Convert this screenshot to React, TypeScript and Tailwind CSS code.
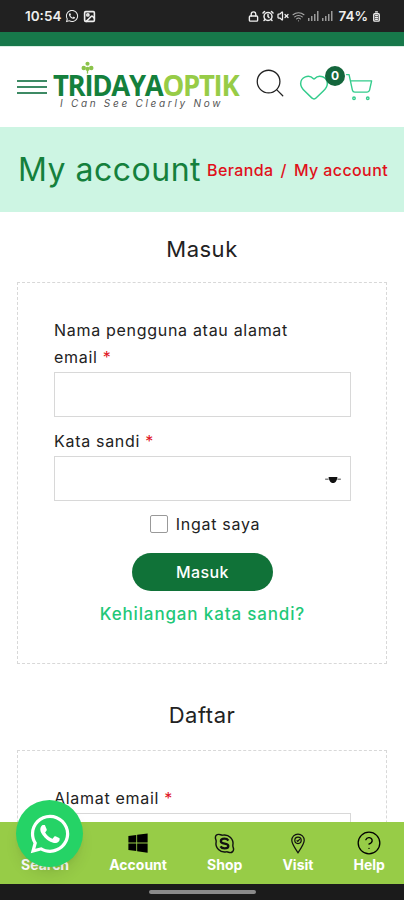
import React from "react";
import { FaWhatsapp, FaWindows } from "react-icons/fa";
import { CircleHelp, Heart, Search, ShoppingCart, Image, Lock, AlarmClock, VolumeX, Wifi, BatteryFull } from "lucide-react";

const font = { fontFamily: "Inter, 'Noto Sans', sans-serif" };

// Small signal bars used in the status bar
const Signal = () => (
  <svg width="11" height="10" viewBox="0 0 11 10" fill="#9a9a9a">
    <rect x="0" y="7" width="1.5" height="3" />
    <rect x="3" y="5" width="1.5" height="5" />
    <rect x="6" y="3" width="1.5" height="7" />
    <rect x="9" y="0" width="1.5" height="10" />
  </svg>
);

const StatusBar = () => (
  <div className="flex h-8 items-center justify-between bg-[#212121] pl-[25px] pr-[22px] text-[13.5px] font-semibold text-[#eeeeee]">
    <div className="flex items-center gap-[4px]">
      <span>10:54</span>
      <FaWhatsapp size={14} />
      <Image size={13} strokeWidth={3} />
    </div>
    <div className="flex items-center gap-[3px]">
      <Lock size={11} strokeWidth={3} />
      <AlarmClock size={12} strokeWidth={3} />
      <VolumeX size={12} strokeWidth={2.5} />
      <Wifi size={13} color="#aaaaaa" />
      <Signal />
      <Signal />
      <span className="ml-[2px]">74%</span>
      <BatteryFull size={11} strokeWidth={3} className="-rotate-90" />
    </div>
  </div>
);

const Logo = () => (
  <div className="relative ml-[6px] mt-[6px] w-[188px]">
    <svg className="absolute left-[27px] top-[-12px]" width="15" height="13" viewBox="0 0 16 13" fill="#8bc34a">
      <circle cx="8" cy="2.5" r="2.2" />
      <circle cx="4" cy="7" r="2.4" />
      <circle cx="12" cy="7" r="2.4" />
      <circle cx="8" cy="8" r="2.2" />
      <rect x="7.3" y="9" width="1.4" height="4" />
    </svg>
    <div className="text-[28px] leading-[25px] font-bold tracking-[-1.3px] scale-x-[0.98] origin-left whitespace-nowrap" style={{ fontFamily: "'Open Sans', sans-serif" }}>
      <span className="text-[#14803c]">TRIDAYA</span>
      <span className="text-[#97cc47]">OPTIK</span>
    </div>
    <div className="ml-[7px] text-[10px] leading-[10px] italic tracking-[2.7px] text-[#555555] whitespace-nowrap">I Can See Clearly Now</div>
  </div>
);

const Header = () => (
  <div className="flex h-[80px] items-center pl-[17px]">
    <div className="flex w-[30px] flex-col gap-[4px]">
      <div className="h-[2px] bg-[#3d8a64]" />
      <div className="h-[2px] bg-[#3d8a64]" />
      <div className="h-[2px] bg-[#3d8a64]" />
    </div>
    <Logo />
    <Search size={34} strokeWidth={0.9} color="#222222" className="ml-[12px] -mt-2" />
    <div className="relative ml-[11px] flex items-center">
      <Heart size={32} strokeWidth={1.1} color="#33cc8c" />
      <div className="absolute left-[27px] top-[-5px] flex h-[20px] w-[20px] items-center justify-center rounded-full bg-[#14663c] text-[12px] font-bold text-white">0</div>
      <ShoppingCart size={30} strokeWidth={1.1} color="#33cc8c" className="ml-[14px]" />
    </div>
  </div>
);

const Banner = () => (
  <div className="flex h-[85px] items-center justify-between bg-[#cdf5e3] pl-[18px] pr-[16px]">
    <h1 className="text-[32px] tracking-[0.5px] text-[#14803c]">My account</h1>
    <div className="flex items-center gap-[7px] text-[16px] font-medium tracking-[0.4px] text-[#e0101a]">
      <span>Beranda</span>
      <span>/</span>
      <span>My account</span>
    </div>
  </div>
);

const Field = ({ label, extra }: { label: React.ReactNode; extra?: React.ReactNode }) => (
  <div>
    <label className="block text-[16px] leading-[27px] tracking-[0.7px] text-[#222222]">
      {label} <span className="text-[#e0141e]">*</span>
    </label>
    <div className="relative mt-[1px] h-[45px] border border-[#d8d8d8] bg-white">{extra}</div>
  </div>
);

const LoginCard = () => (
  <div className="mt-[18px] h-[382px] border border-dashed border-[#d8d8d8] pl-[36px] pr-[35px] pt-[34px]">
    <Field label={<>Nama pengguna atau alamat<br />email</>} />
    <div className="mt-[11px]">
      <Field
        label="Kata sandi"
        extra={
          <svg className="absolute right-[9px] top-[19px]" width="16" height="7" viewBox="0 0 18 8" fill="#111111">
            <path d="M0 3h4v1H0zM14 3h4v1h-4z" />
            <path d="M4 1h10c0 3-2 7-5 7S4 4 4 1z" />
          </svg>
        }
      />
    </div>
    <div className="mt-[11px] flex items-center justify-center gap-[8px] pl-[5px]">
      <div className="h-[18px] w-[18px] rounded-[2px] border border-[#999999]" />
      <span className="text-[16px] tracking-[0.7px] text-[#222222]">Ingat saya</span>
    </div>
    <button className="mx-auto mt-[17px] block h-[38px] w-[141px] rounded-full bg-[#107238] text-[16px] font-medium tracking-[0.4px] text-white">Masuk</button>
    <div className="mt-[11px] text-center text-[17px] font-medium tracking-[0.85px] text-[#1fc878]">Kehilangan kata sandi?</div>
  </div>
);

const NavItem = ({ icon, label }: { icon?: React.ReactNode; label: string }) => (
  <div className="flex flex-col items-center">
    <div className="flex h-[26px] items-center text-black">{icon}</div>
    <span className="text-[14px] leading-[18px] font-bold text-white">{label}</span>
  </div>
);

const Pin = () => (
  <svg width="16" height="22" viewBox="0 0 18 24" fill="none" stroke="#111111" strokeWidth="1.4">
    <path d="M9 23C5 17 2 13 2 9a7 7 0 0 1 14 0c0 4-3 8-7 14z" />
    <circle cx="9" cy="9" r="3.6" />
    <path d="M7.5 9l1.2 1.2L11 7.6" />
  </svg>
);

// Outlined skype mark, the filled one from the icon set reads too heavy
const SkypeOutline = () => (
  <svg width="23" height="23" viewBox="0 0 24 24" fill="none" stroke="#111111">
    <path strokeWidth="1.5" d="M6 2.5c1.5 0 2.5 1 4 .8a9 9 0 0 1 10.7 10.7c-.2 1.500 .8 2.500 .8 4a3.500 3.500 0 0 1-3.500 3.500c-1.500 0-2.500-1-4-.8A9 9 0 0 1 3.300 10c.2-1.500-.8-2.500-.8-4A3.500 3.500 0 0 1 6 2.500z" />
    <path strokeWidth="2.4" d="M16 9c-.8-1.300-2.200-2-4-2-2.300 0-3.800 1-3.800 2.600 0 3.400 7.800 1.600 7.800 5 0 1.500-1.600 2.500-4 2.500-1.900 0-3.300-.7-4.200-2.100" />
  </svg>
);

const BottomNav = () => (
  <div className="absolute bottom-0 left-0 right-0">
    <div className="flex h-[62px] items-start justify-between bg-[#97cc47] pl-[21px] pr-[19px] pt-[8px]">
      <NavItem label="Search" />
      <NavItem icon={<FaWindows size={22} />} label="Account" />
      <NavItem icon={<SkypeOutline />} label="Shop" />
      <NavItem icon={<Pin />} label="Visit" />
      <NavItem icon={<CircleHelp size={26} strokeWidth={1.2} />} label="Help" />
    </div>
    <div className="flex h-[16px] items-center justify-center bg-[#1b1b1b]">
      <div className="h-[4px] w-[107px] rounded-full bg-[#8a8a8a]" />
    </div>
    <div className="absolute left-[16px] top-[-22px] flex h-[67px] w-[67px] items-center justify-center rounded-full bg-[#25d366] text-white shadow-lg">
      <FaWhatsapp size={44} />
    </div>
  </div>
);

export default function App() {
  return (
    <div className="relative h-[900px] w-[404px] overflow-hidden bg-white" style={font}>
      <StatusBar />
      <div className="h-[14px] bg-[#17784a]" />
      <div className="h-px bg-[#d9efe3]" />
      <Header />
      <Banner />
      <main className="px-[17px]">
        <h2 className="mt-[22px] text-center text-[22px] leading-[30px] tracking-[0.5px] text-[#222222]">Masuk</h2>
        <LoginCard />
        <h2 className="mt-[36px] text-center text-[22px] leading-[30px] tracking-[0.5px] text-[#222222]">Daftar</h2>
        <div className="mt-[20px] h-[300px] border border-dashed border-[#d8d8d8] pl-[36px] pr-[35px] pt-[34px]">
          <Field label="Alamat email" />
        </div>
      </main>
      <BottomNav />
    </div>
  );
}
